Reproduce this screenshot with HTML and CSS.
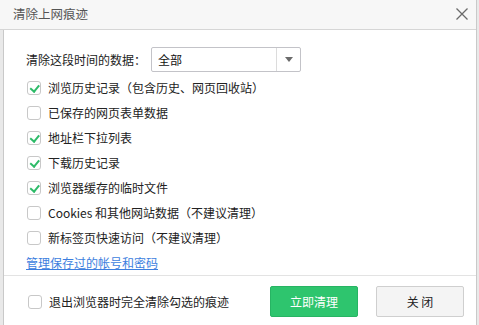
FILE: index.html
```html
<!DOCTYPE html>
<html lang="zh-CN">
<head>
<meta charset="utf-8">
<title>清除上网痕迹</title>
<link rel="stylesheet" href="styles.css">
</head>
<body>
<div class="dialog">
  <div class="titlebar">
    <span class="title">清除上网痕迹</span>
    <span class="close-x">
      <svg width="14" height="14" viewBox="0 0 14 14"><path d="M1.5 1.5 L12.5 12.5 M12.5 1.5 L1.5 12.5" stroke="#6a6a6a" stroke-width="1.3" fill="none"/></svg>
    </span>
  </div>
  <div class="content">
    <div class="range-row">
      <span class="range-label">清除这段时间的数据：</span>
      <div class="select">
        <span class="select-value">全部</span>
        <span class="select-arrow"><svg width="8" height="5" viewBox="0 0 8 5"><path d="M0 0 H8 L4 5 Z" fill="#6b6b6b"/></svg></span>
      </div>
    </div>
    <ul class="options">
      <li class="option"><span class="cb checked"></span>浏览历史记录（包含历史、网页回收站）</li>
      <li class="option"><span class="cb"></span>已保存的网页表单数据</li>
      <li class="option"><span class="cb checked"></span>地址栏下拉列表</li>
      <li class="option"><span class="cb checked"></span>下载历史记录</li>
      <li class="option"><span class="cb checked"></span>浏览器缓存的临时文件</li>
      <li class="option"><span class="cb"></span>Cookies 和其他网站数据（不建议清理）</li>
      <li class="option"><span class="cb"></span>新标签页快速访问（不建议清理）</li>
    </ul>
    <div class="link-row"><a class="link" href="#">管理保存过的帐号和密码</a></div>
    <div class="footer">
      <label class="option footer-check"><span class="cb"></span>退出浏览器时完全清除勾选的痕迹</label>
      <div class="buttons">
        <button class="btn btn-primary">立即清理</button>
        <button class="btn btn-default">关 闭</button>
      </div>
    </div>
  </div>
</div>
</body>
</html>
```
FILE: styles.css
```css
* { box-sizing: border-box; }
html, body { margin: 0; padding: 0; }
body {
  width: 479px;
  height: 325px;
  overflow: hidden;
  background: #e9e9e9;
  font-family: "Noto Sans CJK SC", "Noto Sans", sans-serif;
  font-size: 12px;
  color: #222;
}
.dialog {
  width: 477px;
  height: 325px;
  display: flex;
  flex-direction: column;
  border-right: 1px solid #c9c9c9;
}
.titlebar {
  height: 30px;
  flex: none;
  background: #f7f7f7;
  border-bottom: 1px solid #d6d6d6;
  display: flex;
  align-items: center;
  justify-content: space-between;
  padding: 0 7px 0 13px;
}
.title {
  font-size: 12.5px;
  color: #555;
  line-height: 1;
}
.close-x { display: flex; width: 14px; height: 14px; margin-top: -1px; }
.content {
  flex: 1;
  margin-left: 3px;
  background: #fff;
  border-left: 1px solid #c9c9c9;
  padding: 17px 0 0 22px;
  display: flex;
  flex-direction: column;
}
.range-row {
  display: flex;
  align-items: center;
  height: 25px;
}
.range-label { width: 125px; line-height: 1; }
.select {
  width: 150px;
  height: 25px;
  border: 1px solid #c3c3c8;
  border-radius: 2px;
  display: flex;
  align-items: center;
}
.select-value { flex: 1; padding-left: 6px; line-height: 1; color: #111; }
.select-arrow {
  width: 24px;
  height: 100%;
  border-left: 1px solid #dcdcdc;
  display: flex;
  align-items: center;
  justify-content: center;
}
.options {
  list-style: none;
  margin: 3px 0 0;
  padding: 0;
}
.option {
  display: flex;
  align-items: center;
  height: 25px;
  line-height: 1;
  padding-left: 1px;
}
.cb {
  width: 14px;
  height: 14px;
  border: 1px solid #c8c8c8;
  border-radius: 3px;
  background: #fff;
  margin-right: 7px;
  flex: none;
  position: relative;
}
.cb.checked::after {
  content: "";
  position: absolute;
  left: 3.5px;
  top: 1.5px;
  width: 3.5px;
  height: 6.5px;
  border-right: 2px solid #2dbb68;
  border-bottom: 2px solid #2dbb68;
  transform: rotate(40deg);
}
.link-row {
  height: 25px;
  display: flex;
  align-items: center;
}
.link {
  color: #3c7ede;
  text-decoration: underline;
  line-height: 1;
}
.footer {
  margin-left: -22px;
  border-top: 1px solid #e3e3e3;
  padding: 10px 12px 0 23px;
  display: flex;
  justify-content: space-between;
  align-items: flex-start;
}
.footer-check { height: 31px; }
.buttons { display: flex; gap: 18px; }
.btn {
  width: 88px;
  height: 31px;
  font-family: inherit;
  font-size: 12px;
  border-radius: 2px;
  padding: 0;
  line-height: 1;
}
.btn-primary {
  background: #2ec56e;
  border: 1px solid #27b463;
  color: #fff;
}
.btn-default {
  background: #f4f4f4;
  border: 1px solid #cfcfcf;
  color: #222;
}
```
